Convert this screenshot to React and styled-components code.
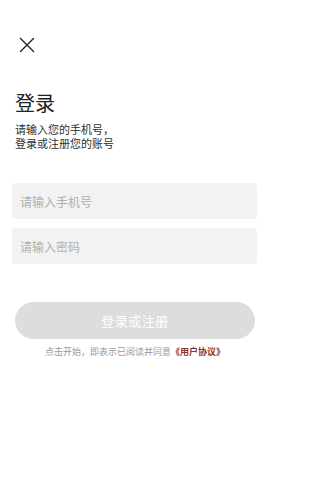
import React from 'react'
import styled, { createGlobalStyle } from 'styled-components'

const GlobalStyle = createGlobalStyle`
	html, body {
		margin:0;
		padding:0;
		background:#ffffff;
		font-family:"Noto Sans CJK SC", "Noto Sans", sans-serif;
	}
`

/***** Component style *****/
const Page = styled.div`
	width:270px;
	height:480px;
	display:flex;
	flex-direction:column;
	box-sizing:border-box;
	padding-top:36px;
`
const CloseButton = styled.button`
	width:17px;
	height:17px;
	margin-left:18px;
	padding:0;
	border:none;
	background:none;
	display:flex;
	align-items:center;
	justify-content:center;
	color:#222;
`
const Header = styled.div`
	padding:38px 15px 0 15px;
	color:#222;
`
const Title = styled.h1`
	margin:0;
	font-size:20px;
	line-height:24px;
	font-weight:400;
`
const Subtitle = styled.p`
	margin:8px 0 0 0;
	font-family:"Liberation Sans", "Noto Sans CJK SC", sans-serif;
	font-size:11px;
	line-height:14px;
	color:#2e2e2e;
	& span{
		display:block;
	}
`
const Form = styled.div`
	display:flex;
	flex-direction:column;
	gap:9px;
	padding:32px 13px 0 12px;
`
const Field = styled.input`
	height:36px;
	box-sizing:border-box;
	border:none;
	border-radius:4px;
	background:#f2f2f2;
	padding:0 8px;
	font-family:inherit;
	font-size:12px;
	color:#333;
	outline:none;
	&::placeholder{
		color:#b0b0b0;
	}
`
const SubmitButton = styled.button`
	margin:38px 15px 0 15px;
	height:37px;
	border:none;
	border-radius:19px;
	background:#dddddd;
	color:#ffffff;
	font-family:inherit;
	font-size:13px;
	letter-spacing:0.5px;
`
const Agreement = styled.p`
	margin:6px 0 0 0;
	text-align:center;
	font-size:9px;
	line-height:14px;
	color:#9a9a9a;
	& a{
		color:#8e2f2f;
		font-weight:700;
		text-decoration:none;
	}
`
/****** ******************** *****/

const LoginPage = () => {
	return (
		<Page>
			<CloseButton title='关闭'>
				<svg width='16' height='16' viewBox='0 0 16 16' fill='none' stroke='currentColor' strokeWidth='1.4' strokeLinecap='round'>
					<path d='M1.5 1.5 L14.5 14.5 M14.5 1.5 L1.5 14.5' />
				</svg>
			</CloseButton>
			<Header>
				<Title>登录</Title>
				<Subtitle>
					<span>请输入您的手机号，</span>
					<span>登录或注册您的账号</span>
				</Subtitle>
			</Header>
			<Form>
				<Field type='tel' placeholder='请输入手机号' />
				<Field type='password' placeholder='请输入密码' />
			</Form>
			<SubmitButton>登录或注册</SubmitButton>
			<Agreement>点击开始，即表示已阅读并同意<a href='#'>《用户协议》</a></Agreement>
		</Page>
	)
}

const App = () => (
	<>
		<GlobalStyle />
		<LoginPage />
	</>
)

export default App
